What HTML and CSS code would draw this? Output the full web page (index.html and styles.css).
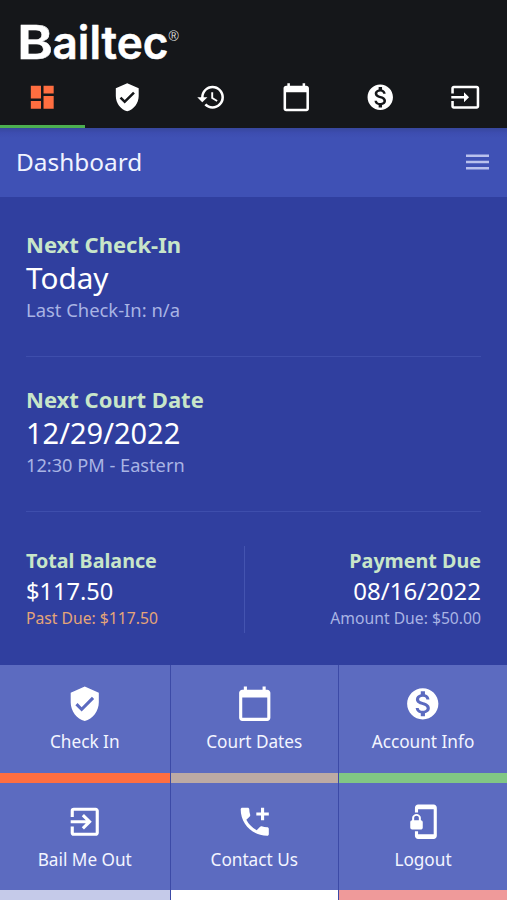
FILE: index.html
```
<!DOCTYPE html>
<html lang="en">
<head>
<meta charset="utf-8">
<title>Bailtec Dashboard</title>
<link rel="stylesheet" href="styles.css">
</head>
<body>
<svg class="defs" aria-hidden="true">
  <symbol id="dash" viewBox="0 0 24 24"><path d="M3 13h8V3H3v10zm0 8h8v-6H3v6zm10 0h8V11h-8v10zm0-18v6h8V3h-8z"/></symbol>
  <symbol id="shield" viewBox="0 0 24 24"><path d="M12 1L3 5v6c0 5.55 3.84 10.74 9 12 5.16-1.26 9-6.45 9-12V5l-9-4zm-2 16l-4-4 1.41-1.41L10 14.17l6.59-6.59L18 9l-8 8z"/></symbol>
  <symbol id="history" viewBox="0 0 24 24"><path d="M13 3a9 9 0 0 0-9 9H1l3.89 3.89.07.14L9 12H6c0-3.87 3.13-7 7-7s7 3.13 7 7-3.13 7-7 7c-1.93 0-3.68-.79-4.94-2.06l-1.42 1.42A8.954 8.954 0 0 0 13 21a9 9 0 0 0 0-18zm-1 5v5l4.28 2.54.72-1.21-3.5-2.08V8H12z"/></symbol>
  <symbol id="calendar" viewBox="0 0 24 24"><path d="M20 3h-1V1h-2v2H7V1H5v2H4c-1.1 0-2 .9-2 2v16c0 1.100.9 2 2 2h16c1.100 0 2-.9 2-2V5c0-1.100-.9-2-2-2zm0 18H4V8h16v13z"/></symbol>
  <symbol id="money" viewBox="0 0 24 24"><path d="M12 2C6.480 2 2 6.480 2 12s4.480 10 10 10 10-4.480 10-10S17.520 2 12 2zm1.410 16.090V20h-2.670v-1.930c-1.710-.36-3.160-1.460-3.270-3.400h1.960c.1 1.050.82 1.870 2.650 1.870 1.960 0 2.400-.98 2.400-1.590 0-.83-.44-1.610-2.670-2.140-2.480-.6-4.180-1.620-4.180-3.670 0-1.720 1.390-2.840 3.110-3.210V4h2.670v1.950c1.860.45 2.790 1.860 2.850 3.390H14.300c-.05-1.110-.64-1.870-2.220-1.870-1.500 0-2.400.68-2.400 1.640 0 .84.65 1.390 2.670 1.910s4.180 1.390 4.180 3.910c-.01 1.830-1.380 2.830-3.120 3.160z"/></symbol>
  <symbol id="input" viewBox="0 0 24 24"><path d="M21 3H3c-1.100 0-2 .9-2 2v4h2V5h18v14H3v-4H1v4c0 1.100.9 2 2 2h18c1.100 0 2-.9 2-2V5c0-1.100-.9-2-2-2zM11 16l4-4-4-4v3H1v2h10v3z"/></symbol>
  <symbol id="exit" viewBox="0 0 24 24"><path d="M10.090 15.590L11.500 17l5-5-5-5-1.410 1.410L12.670 11H3v2h9.670l-2.580 2.590zM19 3H5a2 2 0 0 0-2 2v4h2V5h14v14H5v-4H3v4a2 2 0 0 0 2 2h14c1.100 0 2-.9 2-2V5c0-1.100-.9-2-2-2z"/></symbol>
  <symbol id="phone" viewBox="0 0 24 24"><path d="M20 15.500c-1.250 0-2.450-.2-3.570-.57a1 1 0 0 0-1.020.24l-2.200 2.200a15.050 15.050 0 0 1-6.590-6.580l2.200-2.210c.28-.27.36-.66.25-1.010A11.360 11.360 0 0 1 8.500 4c0-.55-.45-1-1-1H4c-.55 0-1 .45-1 1 0 9.390 7.610 17 17 17 .55 0 1-.45 1-1v-3.500c0-.55-.45-1-1-1zM18 6V3h-2v3h-3v2h3v3h2V8h3V6h-3z"/></symbol>
  <symbol id="lock" viewBox="0 0 24 24"><path d="M19 1H9c-1.100 0-2 .9-2 2v3h2V4h10v16H9v-2H7v3c0 1.100.9 2 2 2h10c1.100 0 2-.9 2-2V3c0-1.100-.9-2-2-2zM10.800 11V9.500C10.800 8.100 9.400 7 8 7S5.200 8.100 5.200 9.500V11c-.6 0-1.200.6-1.200 1.200v3.500c0 .7.6 1.300 1.200 1.300h5.500c.7 0 1.300-.6 1.300-1.200v-3.500c0-.7-.6-1.300-1.200-1.300zm-1.300 0h-3V9.500c0-.8.7-1.300 1.500-1.300s1.500.5 1.500 1.300V11z"/></symbol>
</svg>
<header class="top">
  <svg class="logo" viewBox="0 0 170 64">
    <text class="brand" x="-4" y="46.500" textLength="36" lengthAdjust="spacingAndGlyphs">B</text>
    <text class="brand" x="31.500" y="46.500" textLength="116" lengthAdjust="spacingAndGlyphs">ailtec</text>
    <text class="reg" x="147.500" y="28.500">®</text>
  </svg>
  <nav class="tabs">
    <a class="tab active"><svg><use href="#dash"/></svg></a>
    <a class="tab"><svg><use href="#shield"/></svg></a>
    <a class="tab"><svg><use href="#history"/></svg></a>
    <a class="tab"><svg><use href="#calendar"/></svg></a>
    <a class="tab"><svg><use href="#money"/></svg></a>
    <a class="tab"><svg><use href="#input"/></svg></a>
  </nav>
</header>
<div class="titlebar">
  <h1>Dashboard</h1>
  <svg class="menu" viewBox="0 0 23 16"><path d="M0 0.500h23v2.500H0zM0 6.700h23v2.500H0zM0 13h23v2.500H0z"/></svg>
</div>
<main>
  <section class="block first">
    <h2>Next Check-In</h2>
    <p class="value">Today</p>
    <p class="note">Last Check-In: n/a</p>
  </section>
  <section class="block">
    <h2>Next Court Date</h2>
    <p class="value date">12/29/2022</p>
    <p class="note eastern">12:30 PM - Eastern</p>
  </section>
  <section class="money">
    <div class="balance">
      <h3>Total Balance</h3>
      <p class="amount">$117.50</p>
      <p class="small past">Past Due: $117.50</p>
    </div>
    <div class="payment">
      <h3>Payment Due</h3>
      <p class="amount">08/16/2022</p>
      <p class="small">Amount Due: $50.00</p>
    </div>
  </section>
</main>
<nav class="grid">
  <a class="tile orange"><svg><use href="#shield"/></svg><span>Check In</span></a>
  <a class="tile brown"><svg><use href="#calendar"/></svg><span>Court Dates</span></a>
  <a class="tile green"><svg><use href="#money"/></svg><span>Account Info</span></a>
  <a class="tile pale"><svg><use href="#exit"/></svg><span>Bail Me Out</span></a>
  <a class="tile white"><svg><use href="#phone"/></svg><span>Contact Us</span></a>
  <a class="tile red"><svg><use href="#lock"/></svg><span>Logout</span></a>
</nav>
</body>
</html>
```
FILE: styles.css
```
* { box-sizing: border-box; margin: 0; padding: 0; }
body { width: 507px; height: 900px; overflow: hidden; background: #303f9f; color: #fff; font-family: "Noto Sans", sans-serif; }
.defs { display: none; }
h1, h2, h3, p, span { white-space: nowrap; }
.top { height: 128px; background: #15171a; padding-top: 12px; }
.logo { display: block; width: 170px; height: 64px; margin: 0 0 -10px 21px; overflow: visible; }
.brand { font: 600 46px Inter, sans-serif; fill: #fff; stroke: #fff; stroke-width: .5px; stroke-linejoin: round; }
.reg { font: 14px "Liberation Sans", sans-serif; fill: #ddd; }
.tabs { display: grid; grid-template-columns: repeat(6, 1fr); height: 62px; }
.tab { display: flex; justify-content: center; padding-top: 16px; border-bottom: 3px solid transparent; fill: #fff; }
.tab svg { width: 30.500px; height: 30.500px; }
.active { fill: #ff6e40; border-bottom-color: #4caf50; }
.titlebar { height: 68.500px; display: flex; align-items: center; justify-content: space-between; padding: 0 18px 0 16px; background: linear-gradient(#37479e, #3d4db0 5px, #3f51b5 10px); }
h1 { font-size: 24.400px; line-height: 34px; font-weight: 400; color: #f0f3ff; }
.menu { width: 23px; height: 16px; fill: #b9c1ed; }
main { height: 468.500px; padding: 0 26px; }
.block { height: 155.200px; padding-top: 27px; border-bottom: 1.500px solid #3e4eac; }
.first { height: 160px; padding-top: 32px; }
h2 { font-size: 22px; line-height: 30px; font-weight: 700; color: #c8e6c9; }
.value { font-size: 29.700px; line-height: 38px; }
.date { font-size: 29px; }
.note { font-size: 18.400px; line-height: 26px; color: #a9b4e4; }
.eastern { font-size: 18.200px; }
.money { display: flex; padding-top: 34px; }
.money > div { height: 87px; }
.balance { width: 219px; border-right: 1.500px solid #4454b0; }
.payment { flex: 1; text-align: right; }
h3 { font-size: 19.700px; line-height: 29px; color: #c8e6c9; }
.amount { font-size: 24px; line-height: 32px; }
.balance .amount { font-size: 23.600px; }
.small { font-size: 15.700px; line-height: 22px; color: #a9b4e4; }
.past { color: #e5a578; }
.grid { display: grid; grid-template-columns: 169.500px 167.500px 168px; grid-template-rows: 117.500px 117.500px; column-gap: 1px; background: #3c4aa6; }
.tile { display: flex; flex-direction: column; align-items: center; padding-top: 20px; background: #5c6bc0; border-bottom: 10px solid; fill: #fff; }
.tile svg { width: 37.500px; height: 37.500px; }
.tile span { font-size: 17.200px; line-height: 24px; margin-top: 7.500px; color: #f3f5ff; }
.orange { border-bottom-color: #ff6e40; }
.brown { border-bottom-color: #bcaaa4; }
.green { border-bottom-color: #81c784; }
.pale { border-bottom-color: #c5cae9; }
.white { border-bottom-color: #fff; }
.red { border-bottom-color: #ef9a9a; }
```
